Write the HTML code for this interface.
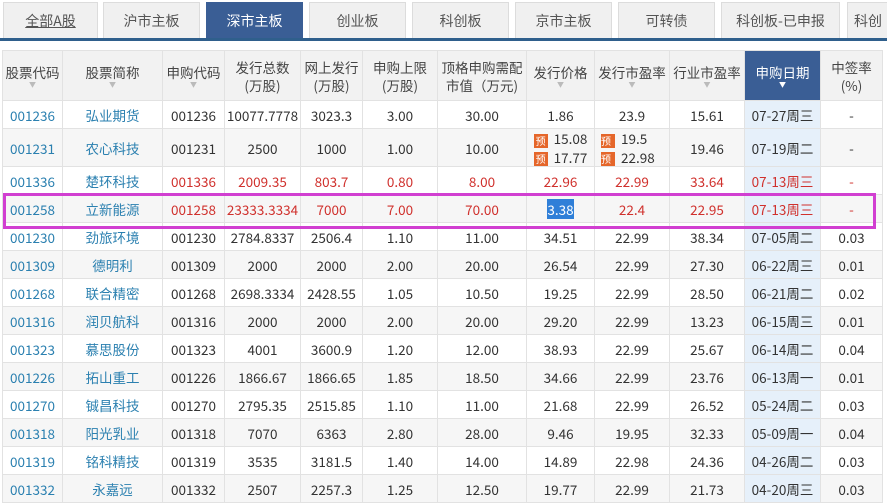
<!DOCTYPE html>
<html><head><meta charset="utf-8"><style>
*{margin:0;padding:0;box-sizing:border-box}
body{width:887px;height:487px;overflow:hidden;background:#fff;font-family:"Noto Sans CJK SC","Liberation Sans",sans-serif;font-size:13px;color:#333;position:relative}
.tab{position:absolute;top:2px;height:36px;background:#f0f0f0;border:1px solid #dcdcdc;border-bottom:none;text-align:center;line-height:36px;font-size:14px;color:#555}
.tab.on{background:#3a5e95;color:#fff;border-color:#3a5e95}
.bar{position:absolute;left:0;top:38px;width:887px;height:3px;background:#2f5f8c}
table{position:absolute;left:2px;top:50px;border-collapse:collapse;table-layout:fixed;width:880px}
td,th{border:1px solid #e2e2e2;text-align:center;white-space:nowrap;overflow:hidden;padding:0;line-height:18px}
th{background:#f2f2f2;font-weight:normal;color:#444;height:50px;line-height:18px;font-size:13.5px}
th.s{background:#3a5e95;color:#fff}
th .a{display:block;height:8px;font-size:7px;line-height:8px;color:#bbb}
th.s .a{color:#fff}
td{height:28px;font-size:13.5px}
tr.e td{background:#f6f6f6}
td.d{background:#e6f0fa !important}
.c{color:#2b80b0}
.r td{color:#d0312d}
.r td.c{color:#2b80b0}
.y{display:inline-block;width:14px;height:14px;background:#e5662a;color:#fff;font-size:10px;line-height:14px;vertical-align:middle;margin-right:6px}
.box{position:absolute;left:3px;top:193px;width:873px;height:36px;border:3px solid #d13fd1}
</style></head><body>
<div class="tab" style="left:3px;width:95px"><u>全部A股</u></div>
<div class="tab" style="left:103px;width:97px">沪市主板</div>
<div class="tab on" style="left:206px;width:97px">深市主板</div>
<div class="tab" style="left:309px;width:97px">创业板</div>
<div class="tab" style="left:412px;width:97px">科创板</div>
<div class="tab" style="left:515px;width:97px">京市主板</div>
<div class="tab" style="left:618px;width:97px">可转债</div>
<div class="tab" style="left:721px;width:119px">科创板-已申报</div>
<div class="tab" style="left:847px;width:60px;text-align:left;padding-left:6px">科创</div>
<div class="bar"></div>
<table>
<colgroup><col style="width:60px"><col style="width:100px"><col style="width:62px"><col style="width:76px"><col style="width:62px"><col style="width:75px"><col style="width:89px"><col style="width:68px"><col style="width:75px"><col style="width:75px"><col style="width:76px"><col style="width:62px"></colgroup>
<tr><th>股票代码<span class="a">▼</span></th><th>股票简称<span class="a">▼</span></th><th>申购代码<span class="a">▼</span></th><th>发行总数<br>(万股)</th><th>网上发行<br>(万股)</th><th>申购上限<br>(万股)</th><th>顶格申购需配<br>市值（万元)</th><th>发行价格<span class="a">▼</span></th><th>发行市盈率<span class="a">▼</span></th><th>行业市盈率<span class="a">▼</span></th><th class="s">申购日期<span class="a">▼</span></th><th>中签率<br>(%)</th></tr>
<tr><td class="c">001236</td><td class="c">弘业期货</td><td>001236</td><td>10077.7778</td><td>3023.3</td><td>3.00</td><td>30.00</td><td>1.86</td><td>23.9</td><td>15.61</td><td class="d">07-27周三</td><td>-</td></tr>
<tr class="e"><td class="c" style="height:38px">001231</td><td class="c">农心科技</td><td>001231</td><td>2500</td><td>1000</td><td>1.00</td><td>10.00</td><td style="line-height:18px"><span class="y">预</span>15.08<br><span class="y">预</span>17.77</td><td style="line-height:18px;text-align:left;padding-left:6px"><span class="y">预</span>19.5<br><span class="y">预</span>22.98</td><td>19.46</td><td class="d">07-19周二</td><td>-</td></tr>
<tr class="r"><td class="c">001336</td><td class="c">楚环科技</td><td>001336</td><td>2009.35</td><td>803.7</td><td>0.80</td><td>8.00</td><td>22.96</td><td>22.99</td><td>33.64</td><td class="d">07-13周三</td><td>-</td></tr>
<tr class="r e"><td class="c">001258</td><td class="c">立新能源</td><td>001258</td><td>23333.3334</td><td>7000</td><td>7.00</td><td>70.00</td><td><span style="background:#2f7fd8;color:#fff">3.38</span></td><td>22.4</td><td>22.95</td><td class="d">07-13周三</td><td>-</td></tr>
<tr><td class="c">001230</td><td class="c">劲旅环境</td><td>001230</td><td>2784.8337</td><td>2506.4</td><td>1.10</td><td>11.00</td><td>34.51</td><td>22.99</td><td>38.34</td><td class="d">07-05周二</td><td>0.03</td></tr>
<tr class="e"><td class="c">001309</td><td class="c">德明利</td><td>001309</td><td>2000</td><td>2000</td><td>2.00</td><td>20.00</td><td>26.54</td><td>22.99</td><td>27.30</td><td class="d">06-22周三</td><td>0.01</td></tr>
<tr><td class="c">001268</td><td class="c">联合精密</td><td>001268</td><td>2698.3334</td><td>2428.55</td><td>1.05</td><td>10.50</td><td>19.25</td><td>22.99</td><td>28.50</td><td class="d">06-21周二</td><td>0.02</td></tr>
<tr class="e"><td class="c">001316</td><td class="c">润贝航科</td><td>001316</td><td>2000</td><td>2000</td><td>2.00</td><td>20.00</td><td>29.20</td><td>22.99</td><td>13.23</td><td class="d">06-15周三</td><td>0.01</td></tr>
<tr><td class="c">001323</td><td class="c">慕思股份</td><td>001323</td><td>4001</td><td>3600.9</td><td>1.20</td><td>12.00</td><td>38.93</td><td>22.99</td><td>25.67</td><td class="d">06-14周二</td><td>0.04</td></tr>
<tr class="e"><td class="c">001226</td><td class="c">拓山重工</td><td>001226</td><td>1866.67</td><td>1866.65</td><td>1.85</td><td>18.50</td><td>34.66</td><td>22.99</td><td>23.76</td><td class="d">06-13周一</td><td>0.01</td></tr>
<tr><td class="c">001270</td><td class="c">铖昌科技</td><td>001270</td><td>2795.35</td><td>2515.85</td><td>1.10</td><td>11.00</td><td>21.68</td><td>22.99</td><td>26.52</td><td class="d">05-24周二</td><td>0.03</td></tr>
<tr class="e"><td class="c">001318</td><td class="c">阳光乳业</td><td>001318</td><td>7070</td><td>6363</td><td>2.80</td><td>28.00</td><td>9.46</td><td>19.95</td><td>32.33</td><td class="d">05-09周一</td><td>0.04</td></tr>
<tr><td class="c">001319</td><td class="c">铭科精技</td><td>001319</td><td>3535</td><td>3181.5</td><td>1.40</td><td>14.00</td><td>14.89</td><td>22.98</td><td>24.36</td><td class="d">04-26周二</td><td>0.03</td></tr>
<tr class="e"><td class="c">001332</td><td class="c">永嘉远</td><td>001332</td><td>2507</td><td>2257.3</td><td>1.25</td><td>12.50</td><td>19.77</td><td>22.99</td><td>21.73</td><td class="d">04-20周三</td><td>0.03</td></tr>
</table>
<div class="box"></div>
</body></html>
